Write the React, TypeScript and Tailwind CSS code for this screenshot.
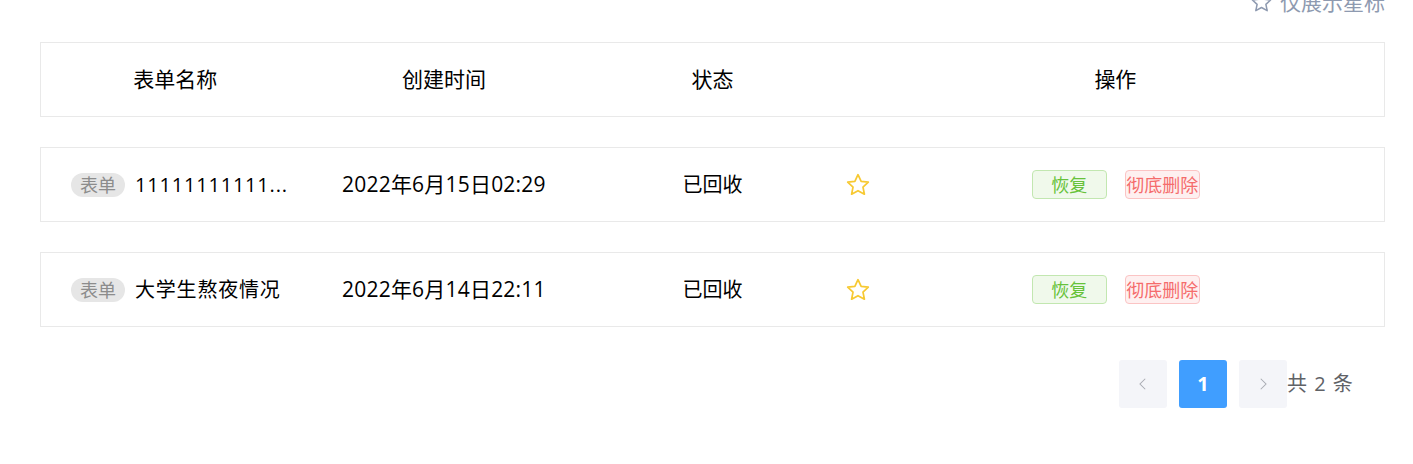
const font = { fontFamily: '"Open Sans", "Noto Sans CJK SC", sans-serif' };

const StarIcon = ({ className }: { className?: string }) => (
  <svg viewBox="0 0 24 24" className={className} fill="none" stroke="currentColor" strokeWidth={1.6} strokeLinejoin="round">
    <polygon points="12,2.5 14.9,8.6 21.5,9.4 16.6,13.9 17.9,20.5 12,17.2 6.1,20.5 7.4,13.9 2.5,9.4 9.1,8.6" />
  </svg>
);

const rows = [
  { name: "11111111111...", time: "2022年6月15日02:29", status: "已回收" },
  { name: "大学生熬夜情况", time: "2022年6月14日22:11", status: "已回收" },
];

export default function App() {
  return (
    <div className="w-[1413px] h-[464px] bg-white overflow-hidden text-black" style={font}>
      <div className="pl-[40px] w-[1385px]">
        <div className="h-[42px] flex justify-end items-start">
          <div className="-mt-[12px] flex items-center gap-[7px] text-[21px] leading-[28px] text-[#8e9ab0]">
            <StarIcon className="w-[23px] h-[23px]" />
            <span>仅展示星标</span>
          </div>
        </div>

        <div className="h-[75px] border border-[#e9e9e9] flex items-center text-[21px]">
          <div className="w-[20%] text-center">表单名称</div>
          <div className="w-[20%] text-center">创建时间</div>
          <div className="w-[20%] text-center">状态</div>
          <div className="w-[40%] text-center">操作</div>
        </div>

        {rows.map((r) => (
          <div key={r.time} className="mt-[30px] h-[75px] border border-[#e9e9e9] flex items-center text-[20px]">
            <div className="w-[20%] flex items-center pl-[30px] pr-[10px] min-w-0">
              <span className="shrink-0 h-[24px] px-[9px] rounded-full bg-[#e6e6e6] text-[#8c8c8c] text-[18px] leading-[24px]">
                表单
              </span>
              <span className="ml-[10px] whitespace-nowrap tracking-[0.8px]">{r.name}</span>
            </div>
            <div className="w-[20%] text-center text-[21px] tracking-[0.2px]">{r.time}</div>
            <div className="w-[20%] text-center">{r.status}</div>
            <div className="w-[40%] flex items-center">
              <StarIcon className="w-[26px] h-[26px] text-[#f7c932] -ml-[2px]" />
              <div className="ml-[161px] flex items-center gap-[18px]">
                <button className="w-[75px] h-[29px] rounded-[4px] border border-[#c2e7b0] bg-[#f0f9eb] text-[#67c23a] text-[18px] leading-none">
                  恢复
                </button>
                <button className="w-[75px] h-[29px] rounded-[4px] border border-[#fbc4c4] bg-[#fef0f0] text-[#f56c6c] text-[18px] leading-none whitespace-nowrap">
                  彻底删除
                </button>
              </div>
            </div>
          </div>
        ))}

        <div className="mt-[33px] flex items-center pl-[1079px]">
          <div className="w-[48px] h-[48px] rounded-[3px] bg-[#f4f5f9] flex items-center justify-center text-[#a8abb2]">
            <svg viewBox="0 0 24 24" className="w-[18px] h-[18px]" fill="none" stroke="currentColor" strokeWidth={1.4}>
              <polyline points="15,5 8,12 15,19" />
            </svg>
          </div>
          <div className="ml-[12px] w-[48px] h-[48px] rounded-[3px] bg-[#409eff] flex items-center justify-center text-white text-[20px] font-bold">
            1
          </div>
          <div className="ml-[12px] w-[48px] h-[48px] rounded-[3px] bg-[#f4f5f9] flex items-center justify-center text-[#a8abb2]">
            <svg viewBox="0 0 24 24" className="w-[18px] h-[18px]" fill="none" stroke="currentColor" strokeWidth={1.4}>
              <polyline points="9,5 16,12 9,19" />
            </svg>
          </div>
          <span className="text-[20px] text-[#606266] tracking-[1px]">共 2 条</span>
        </div>
      </div>
    </div>
  );
}
